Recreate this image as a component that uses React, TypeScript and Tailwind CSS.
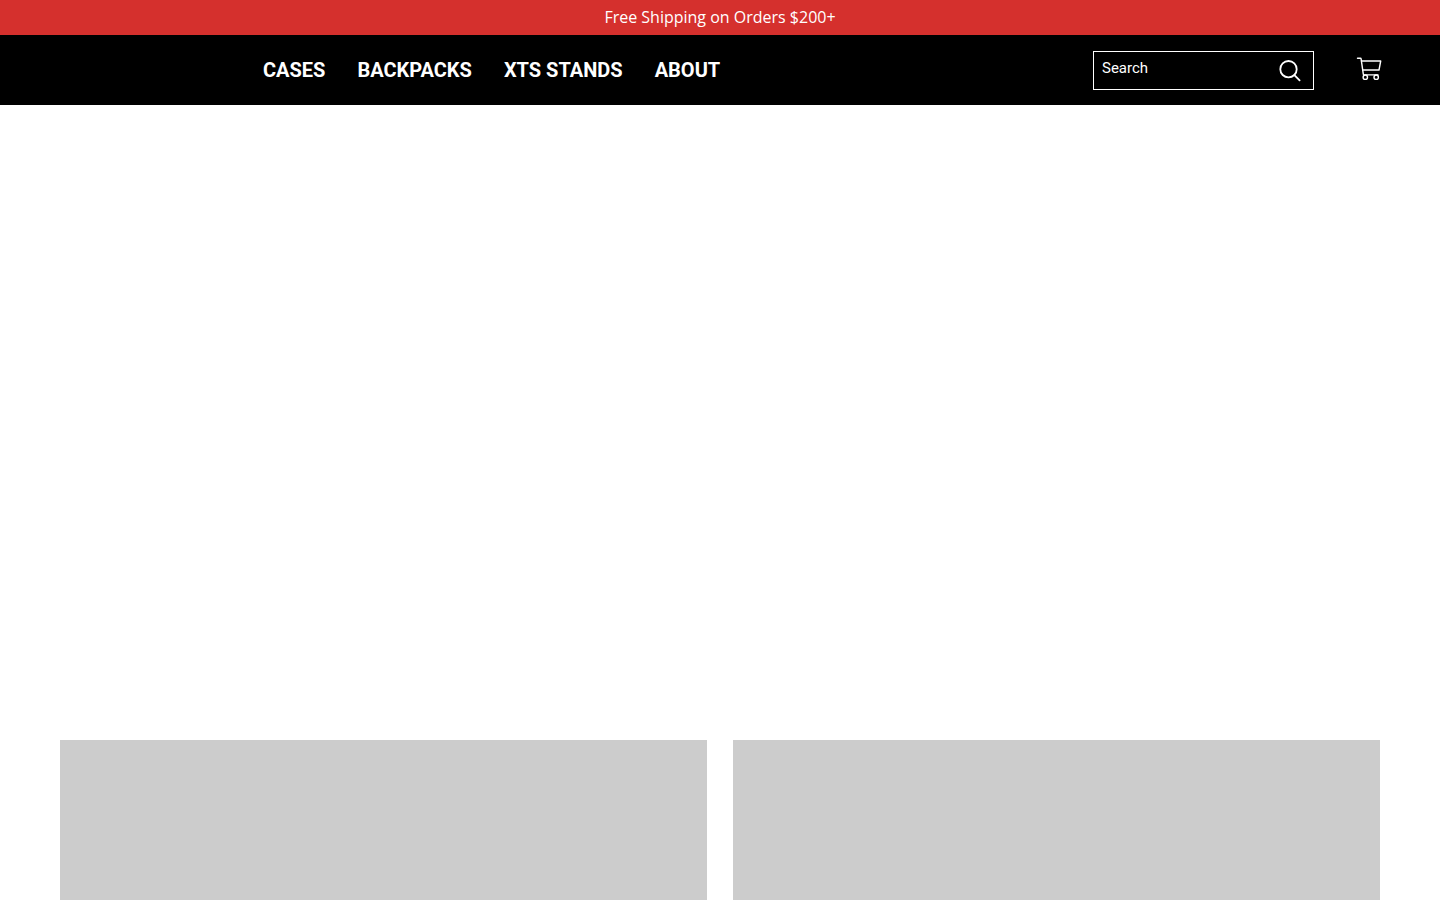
const links = ["CASES", "BACKPACKS", "XTS STANDS", "ABOUT"];

function SearchIcon() {
  return (
    <svg width="22" height="22" viewBox="0 0 22 22" fill="none" stroke="currentColor" strokeWidth="1.8" strokeLinecap="round" aria-hidden="true">
      <circle cx="9.5" cy="9.2" r="8.2" />
      <path d="M15.4 15.1L20.6 20.3" />
    </svg>
  );
}

function CartIcon() {
  return (
    <svg width="26" height="24" viewBox="0 0 26 24" fill="none" stroke="currentColor" strokeWidth="1.4" strokeLinecap="round" strokeLinejoin="round" aria-hidden="true">
      <path d="M1.5 1.2H4.4Q5 1.2 5.1 1.9L7.3 17.2Q7.4 17.9 8 17.9H22" />
      <path d="M5.5 4H24.7L23 13H6.8" />
      <circle cx="9.3" cy="20.2" r="2.2" />
      <circle cx="20.2" cy="20.2" r="2.2" />
    </svg>
  );
}

export default function App() {
  return (
    <div className="flex min-h-screen flex-col bg-white font-['Roboto','Liberation_Sans',sans-serif]">
      <p className="flex h-[35px] items-center justify-center bg-[#d5302d] pb-0.5 font-['Open_Sans','Noto_Sans',sans-serif] text-base text-white">
        Free Shipping on Orders $200+
      </p>
      <header className="flex h-[70px] items-center bg-black pr-[58px] pl-[60px] text-white">
        <div className="w-[203px] shrink-0" />
        <nav className="flex gap-8">
          {links.map((label) => (
            <a key={label} href="#" className="text-xl font-bold whitespace-nowrap">
              {label}
            </a>
          ))}
        </nav>
        <form role="search" className="mt-px ml-auto flex h-[39px] w-[221px] border border-white">
          <input
            type="search"
            aria-label="Search"
            placeholder="Search"
            className="min-w-0 flex-1 bg-transparent pb-1 pl-2 text-[15px] outline-none placeholder:text-white"
          />
          <button type="submit" aria-label="Submit search" className="flex w-[46px] items-center justify-center">
            <SearchIcon />
          </button>
        </form>
        <a href="#" aria-label="Cart" className="ml-[42px] pb-0.5">
          <CartIcon />
        </a>
      </header>
      <main className="flex flex-1 flex-col">
        <section className="h-[635px] shrink-0" />
        <section className="grid flex-1 grid-cols-2 gap-[26px] px-[60px]">
          <div className="min-h-40 bg-[#cccccc]" />
          <div className="min-h-40 bg-[#cccccc]" />
        </section>
      </main>
    </div>
  );
}
